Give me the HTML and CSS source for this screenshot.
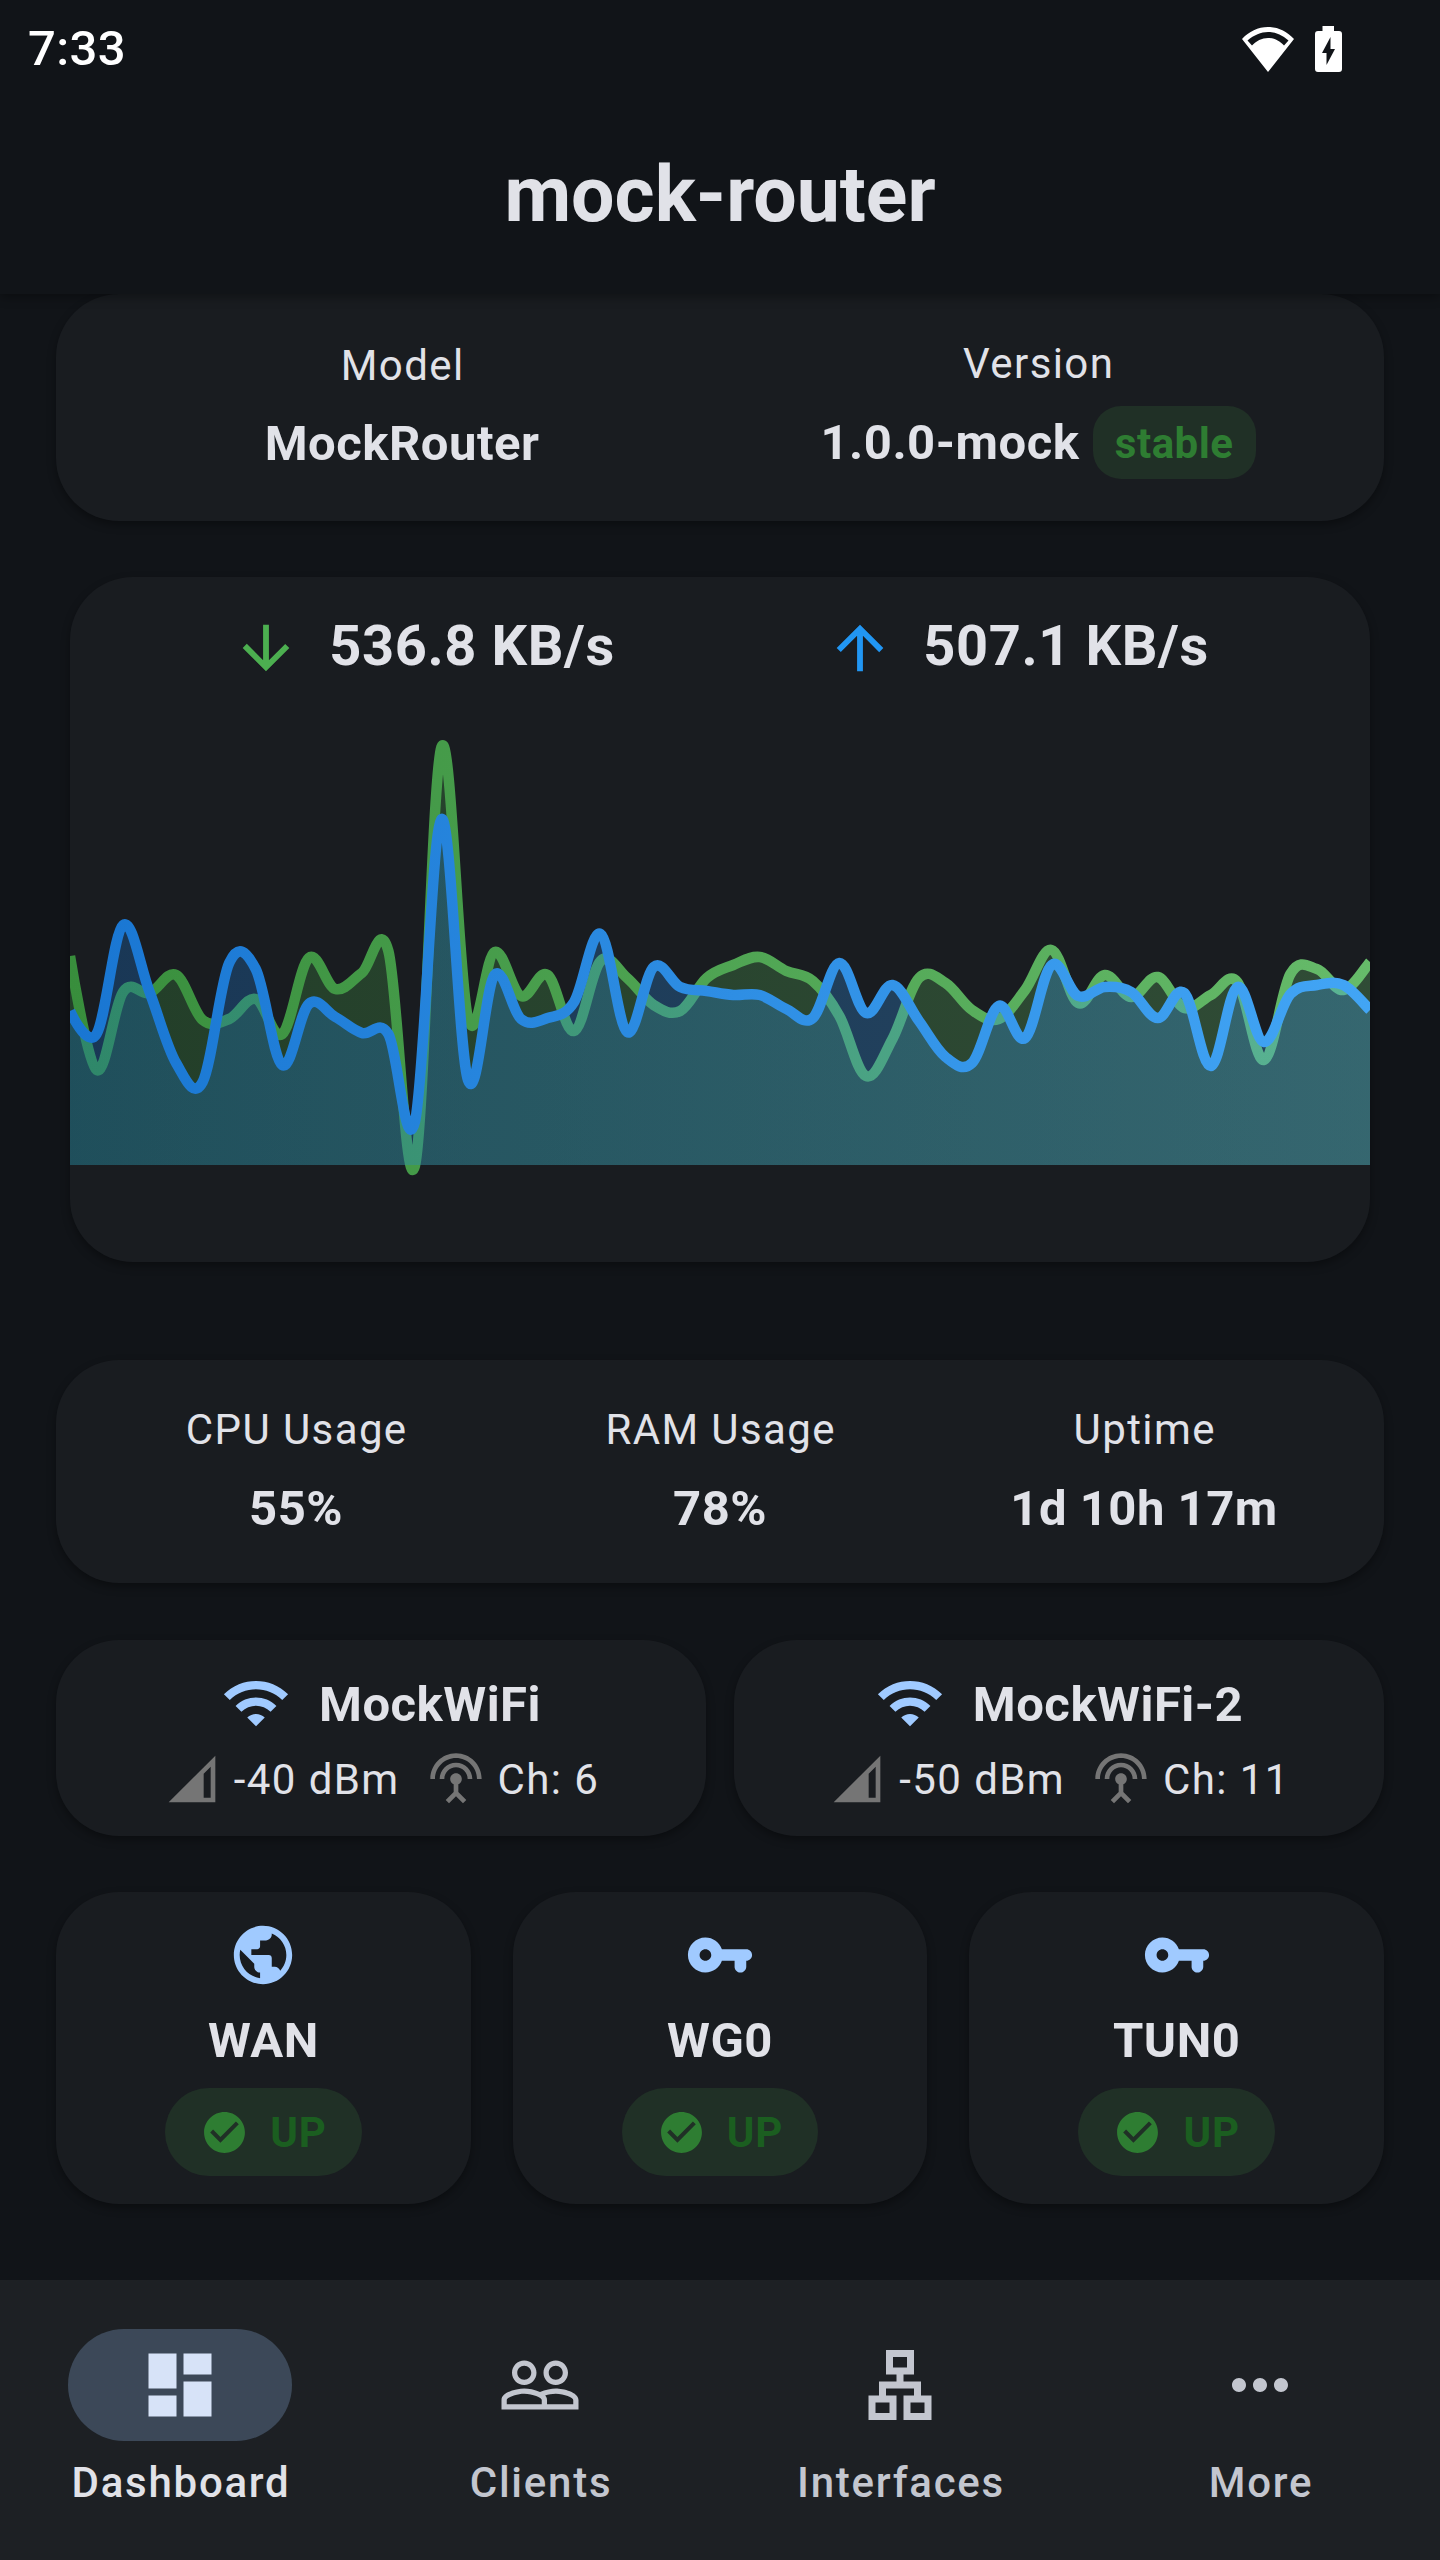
FILE: index.html
```html
<!DOCTYPE html>
<html lang="en">
<head>
<meta charset="utf-8">
<title>mock-router</title>
<link rel="stylesheet" href="styles.css">
</head>
<body>
<svg class="sprite" aria-hidden="true">
  <symbol id="wifi" viewBox="0 0 24 24"><path d="M1 9l2 2c4.97-4.97 13.03-4.97 18 0l2-2C16.93 2.93 7.08 2.93 1 9zm8 8l3 3 3-3c-1.65-1.66-4.34-1.66-6 0zm-4-4l2 2c2.76-2.76 7.24-2.76 10 0l2-2C15.14 9.14 8.87 9.14 5 13z"/></symbol>
  <symbol id="signal" viewBox="0 0 24 24"><path fill-rule="evenodd" d="M2 22h20V2zM20 20h-3V9.800l3-3z"/></symbol>
  <symbol id="antenna" viewBox="0 0 24 24"><path d="M12 5c-3.870 0-7 3.130-7 7h2c0-2.760 2.240-5 5-5s5 2.240 5 5h2c0-3.870-3.130-7-7-7zm1 9.290c.880-.390 1.500-1.260 1.500-2.290 0-1.380-1.120-2.500-2.500-2.500S9.500 10.620 9.500 12c0 1.020.620 1.900 1.500 2.290v3.300L7.590 21 9 22.410l3-3 3 3L16.410 21 13 17.590v-3.300zM12 1C5.930 1 1 5.930 1 12h2c0-4.970 4.030-9 9-9s9 4.030 9 9h2c0-6.070-4.930-11-11-11z"/></symbol>
  <symbol id="globe" viewBox="0 0 24 24"><path d="M12 2C6.480 2 2 6.480 2 12s4.480 10 10 10 10-4.480 10-10S17.520 2 12 2zm-1 17.930c-3.950-.490-7-3.850-7-7.930 0-.620.080-1.210.210-1.790L9 15v1c0 1.100.9 2 2 2v1.930zm6.900-2.540c-.260-.810-1-1.390-1.900-1.390h-1v-3c0-.550-.450-1-1-1H8v-2h2c.550 0 1-.450 1-1V7h2c1.100 0 2-.9 2-2v-.410c2.930 1.190 5 4.060 5 7.410 0 2.080-.8 3.970-2.100 5.390z"/></symbol>
  <symbol id="key" viewBox="0 0 24 24"><path d="M21 10h-8.350C11.830 7.670 9.610 6 7 6c-3.310 0-6 2.690-6 6s2.690 6 6 6c2.610 0 4.830-1.670 5.650-4H17v2c0 1.100.9 2 2 2s2-.9 2-2v-2c1.100 0 2-.9 2-2s-.9-2-2-2zM7 14c-1.100 0-2-.9-2-2s.9-2 2-2 2 .9 2 2-.9 2-2 2z"/></symbol>
  <symbol id="check" viewBox="0 0 24 24"><path d="M12 2C6.480 2 2 6.480 2 12s4.480 10 10 10 10-4.480 10-10S17.520 2 12 2zm-2 15l-5-5 1.410-1.410L10 14.170l7.590-7.590L19 8l-9 9z"/></symbol>
  <symbol id="down" viewBox="0 0 24 24"><path d="M20 12l-1.410-1.410L13 16.170V4h-2v12.170l-5.580-5.590L4 12l8 8 8-8z"/></symbol>
  <symbol id="up" viewBox="0 0 24 24"><path d="M4 12l1.410 1.410L11 7.830V20h2V7.830l5.580 5.590L20 12l-8-8-8 8z"/></symbol>
  <symbol id="dashboard" viewBox="0 0 24 24"><path d="M3 13h8V3H3v10zm0 8h8v-6H3v6zm10 0h8V11h-8v10zm0-18v6h8V3h-8z"/></symbol>
  <symbol id="people" viewBox="0 0 24 24"><path d="M16.500 13c-1.200 0-3.070.340-4.500 1-1.430-.670-3.300-1-4.500-1C5.330 13 1 14.080 1 16.250V19h22v-2.750c0-2.170-4.330-3.250-6.500-3.250zm-4 4.500h-10v-1.250c0-.540 2.560-1.750 5-1.750s5 1.210 5 1.750v1.250zm9 0H14v-1.250c0-.460-.2-.860-.520-1.220.880-.3 1.960-.530 3.020-.530 2.440 0 5 1.210 5 1.750v1.250zM7.500 12c1.930 0 3.500-1.570 3.500-3.500S9.430 5 7.500 5 4 6.570 4 8.500 5.570 12 7.500 12zm0-5.500c1.100 0 2 .9 2 2s-.9 2-2 2-2-.9-2-2 .9-2 2-2zm9 5.500c1.930 0 3.500-1.570 3.500-3.500S18.430 5 16.500 5 13 6.570 13 8.500s1.570 3.500 3.500 3.500zm0-5.500c1.100 0 2 .9 2 2s-.9 2-2 2-2-.9-2-2 .9-2 2-2z"/></symbol>
  <symbol id="lan" viewBox="0 0 24 24"><path fill-rule="evenodd" d="M13 22h8v-7h-3v-4h-5V9h3V2H8v7h3v2H6v4H3v7h8v-7H8v-2h8v2h-3zM10 7V4h4v3zM9 17v3H5v-3zM19 17v3h-4v-3z"/></symbol>
  <symbol id="more" viewBox="0 0 24 24"><path d="M6 10c-1.100 0-2 .9-2 2s.9 2 2 2 2-.9 2-2-.9-2-2-2zm12 0c-1.100 0-2 .9-2 2s.9 2 2 2 2-.9 2-2-.9-2-2-2zm-6 0c-1.100 0-2 .9-2 2s.9 2 2 2 2-.9 2-2-.9-2-2-2z"/></symbol>
</svg>

<header class="topbar">
  <div class="status">
    <span class="clock">7:33</span>
    <span class="status-icons">
      <svg class="status-wifi" viewBox="0 0 52 45"><path fill-rule="evenodd" d="M26 0C16 0 7 4.500 0 12l26 33 26-33C45 4.500 36 0 26 0zM5.500 13.500C12 8 19 5 26 5s14 3 20.500 8.500L42 18.500c-4-4.500-10-7.500-16-7.500s-12 3-16 7.500z"/></svg>
      <svg class="status-battery" viewBox="0 0 27 46"><path fill-rule="evenodd" d="M7.500 0h11.500v5h5a3 3 0 0 1 3 3v35a3 3 0 0 1-3 3H3a3 3 0 0 1-3-3V8a3 3 0 0 1 3-3h4.500zM15.500 11L7 27h4.500v12L20 23h-4.500z"/></svg>
    </span>
  </div>
  <h1 class="title">mock-router</h1>
</header>

<main class="content">
  <section class="card device">
    <div class="stat model"><span class="label">Model</span><span class="value">MockRouter</span></div>
    <div class="stat"><span class="label">Version</span><span class="value version">1.0.0-mock<span class="tag">stable</span></span></div>
  </section>

  <section class="card traffic">
    <div class="rates">
      <div class="rate"><svg class="icon-rate down"><use href="#down"/></svg><span>536.8 KB/s</span></div>
      <div class="rate"><svg class="icon-rate up"><use href="#up"/></svg><span>507.1 KB/s</span></div>
    </div>
    <svg class="chart" viewBox="0 0 1300 560">
      <defs>
        <linearGradient id="green" gradientUnits="userSpaceOnUse" x1="0" y1="0" x2="1300" y2="0"><stop offset="0" stop-color="#388e3c"/><stop offset="1" stop-color="#66bb6a"/></linearGradient>
        <linearGradient id="blue" gradientUnits="userSpaceOnUse" x1="0" y1="0" x2="1300" y2="0"><stop offset="0" stop-color="#1976d2"/><stop offset="1" stop-color="#42a5f5"/></linearGradient>
      </defs>
      <path class="area" id="rx-area" fill="url(#green)"/>
      <path class="line" id="rx-line" stroke="url(#green)"/>
      <path class="area" id="tx-area" fill="url(#blue)"/>
      <path class="line" id="tx-line" stroke="url(#blue)"/>
    </svg>
  </section>

  <section class="card system">
    <div class="stat"><span class="label">CPU Usage</span><span class="value">55%</span></div>
    <div class="stat"><span class="label">RAM Usage</span><span class="value">78%</span></div>
    <div class="stat"><span class="label">Uptime</span><span class="value">1d 10h 17m</span></div>
  </section>

  <section class="wifi-row">
    <div class="card radio">
      <div class="radio-name"><svg class="icon-wifi"><use href="#wifi"/></svg><span>MockWiFi</span></div>
      <div class="radio-info"><svg class="icon-small"><use href="#signal"/></svg><span>-40 dBm</span><svg class="icon-small second"><use href="#antenna"/></svg><span>Ch: 6</span></div>
    </div>
    <div class="card radio">
      <div class="radio-name"><svg class="icon-wifi"><use href="#wifi"/></svg><span>MockWiFi-2</span></div>
      <div class="radio-info"><svg class="icon-small"><use href="#signal"/></svg><span>-50 dBm</span><svg class="icon-small second"><use href="#antenna"/></svg><span>Ch: 11</span></div>
    </div>
  </section>

  <section class="iface-row">
    <div class="card iface"><svg class="icon-iface"><use href="#globe"/></svg><span class="iface-name">WAN</span><span class="chip"><svg class="icon-check"><use href="#check"/></svg>UP</span></div>
    <div class="card iface"><svg class="icon-iface"><use href="#key"/></svg><span class="iface-name">WG0</span><span class="chip"><svg class="icon-check"><use href="#check"/></svg>UP</span></div>
    <div class="card iface"><svg class="icon-iface"><use href="#key"/></svg><span class="iface-name">TUN0</span><span class="chip"><svg class="icon-check"><use href="#check"/></svg>UP</span></div>
  </section>
</main>

<nav class="navbar">
  <a class="tab active"><span class="pill"><svg class="icon-tab"><use href="#dashboard"/></svg></span><span class="tab-label">Dashboard</span></a>
  <a class="tab"><span class="pill"><svg class="icon-tab"><use href="#people"/></svg></span><span class="tab-label">Clients</span></a>
  <a class="tab"><span class="pill"><svg class="icon-tab"><use href="#lan"/></svg></span><span class="tab-label">Interfaces</span></a>
  <a class="tab"><span class="pill"><svg class="icon-tab"><use href="#more"/></svg></span><span class="tab-label">More</span></a>
</nav>
<script src="chart.js"></script>
</body>
</html>
```

FILE: styles.css
```css
* { box-sizing: border-box; }

body {
  margin: 0;
  width: 1440px;
  height: 2560px;
  display: flex;
  flex-direction: column;
  overflow: hidden;
  background: #111418;
  color: #e1e2e8;
  font-family: Roboto, "Liberation Sans", sans-serif;
}

svg { display: block; fill: currentColor; flex: none; }
.sprite { display: none; }

.topbar {
  position: relative;
  height: 294px;
  flex: none;
  background: #111418;
  box-shadow: 0 3px 10px rgba(0, 0, 0, .35);
}
.status {
  height: 98px;
  padding: 0 98px 0 28px;
  display: flex;
  align-items: center;
  justify-content: space-between;
  color: #fff;
}
.clock { font-size: 49px; font-weight: 500; line-height: 58px; letter-spacing: .35px; }
.status-icons { display: flex; align-items: center; gap: 21.5px; }
.status-wifi { width: 52px; height: 45px; }
.status-battery { width: 27px; height: 46px; }
.title {
  margin: 0;
  height: 196px;
  line-height: 195px;
  text-align: center;
  font-size: 77px;
  font-weight: 700;
}

.content {
  flex: 1;
  padding: 0 56px;
  display: flex;
  flex-direction: column;
}
.card {
  background: #191c20;
  border-radius: 63px;
  box-shadow: 0 4px 9px rgba(0, 0, 0, .35);
}
.stat { flex: 1; display: flex; flex-direction: column; align-items: center; }
.label { padding-left: 1.4px; font-size: 42px; letter-spacing: 1.4px; line-height: 56px; }
.value { font-size: 49px; font-weight: 700; letter-spacing: .5px; line-height: 70px; }

.device { display: flex; height: 227px; padding: 42px 28px 0; }
.device .stat { gap: 14px; }
.device .model { padding-top: 2px; gap: 15px; }
.device .version { display: flex; align-items: center; gap: 13.5px; }
.tag {
  height: 73px;
  padding: 0 22px;
  border-radius: 28px;
  background: #203026;
  color: #2e7d32;
  font-size: 42px;
  line-height: 75px;
  letter-spacing: .5px;
}

.traffic {
  margin: 56px 14px 0;
  height: 685px;
  overflow: hidden;
}
.rates { display: flex; padding: 28px 56px 0; height: 125px; }
.rate { flex: 1; display: flex; justify-content: center; gap: 28px; font-size: 56px; font-weight: 700; line-height: 82px; letter-spacing: .6px; }
.icon-rate { width: 70px; height: 70px; margin-top: 8px; }
.icon-rate.down { color: #4caf50; }
.icon-rate.up { color: #2196f3; }
.chart { width: 1300px; height: 560px; overflow: hidden; }
.area { opacity: .3; }
.line { fill: none; stroke-width: 10.5; stroke-linejoin: round; }

.system { display: flex; margin-top: 98px; height: 223px; padding: 42px 28px 0; }
.system .stat { gap: 16px; }

.wifi-row { display: grid; grid-template-columns: 1fr 1fr; gap: 28px; margin-top: 57px; }
.radio { height: 196px; padding-top: 28px; display: flex; flex-direction: column; align-items: center; }
.radio-name { display: flex; align-items: center; gap: 28px; height: 70px; font-size: 49px; font-weight: 700; letter-spacing: .5px; line-height: 70px; }
.radio-name span { padding-top: 3px; }
.icon-wifi { width: 70px; height: 70px; color: #a0caff; }
.radio-info { display: flex; align-items: center; gap: 14px; height: 56px; margin-top: 13px; padding-left: 1px; font-size: 42px; letter-spacing: 1.4px; }
.icon-small { width: 56px; height: 56px; color: #757575; }
.second { margin-left: 14px; }

.iface-row { display: grid; grid-template-columns: repeat(3, 1fr); gap: 42px; margin-top: 56px; }
.iface { height: 312px; padding-top: 28px; display: flex; flex-direction: column; align-items: center; }
.icon-iface { width: 70px; height: 70px; color: #a0caff; }
.iface-name { margin-top: 16px; height: 68px; line-height: 70px; font-size: 49px; font-weight: 700; letter-spacing: .5px; }
.chip {
  display: flex;
  align-items: center;
  gap: 21px;
  height: 88px;
  margin-top: 14px;
  padding: 0 35px;
  border-radius: 44px;
  background: #203026;
  color: #1b5e20;
  font-size: 42px;
  font-weight: 700;
  letter-spacing: .8px;
}
.icon-check { width: 49px; height: 49px; color: #2e7d32; }

.navbar { flex: none; height: 280px; display: flex; background: #1d2024; }
.tab {
  flex: 1;
  display: flex;
  flex-direction: column;
  align-items: center;
  gap: 14px;
  padding-top: 49px;
  color: #c3c6cf;
  font-size: 42px;
  font-weight: 500;
  letter-spacing: 1.75px;
  line-height: 56px;
}
.tab-label { padding-left: 2px; }
.pill { display: flex; align-items: center; justify-content: center; width: 224px; height: 112px; border-radius: 56px; }
.icon-tab { width: 84px; height: 84px; }
.active { color: #e1e2e8; }
.active .pill { background: #3c4858; color: #d7e3f8; }
```

FILE: chart.js
```js
const WIDTH = 1300;
const BASE = 463;
const SMOOTH = 0.35;

// Traffic samples as heights above the chart's baseline.
const rx = [209, 95, 173, 172, 190, 145, 146, 166, 131, 207, 176, 192, 214, -1, 418, 147, 213, 169, 190, 134, 204, 187, 160, 154, 187, 200, 208, 194, 184, 149, 89, 126, 187, 182, 155, 146, 175, 215, 162, 190, 168, 188, 157, 170, 183, 105, 191, 196, 175, 203];
const tx = [154, 131, 240, 173, 102, 83, 202, 196, 100, 161, 148, 132, 131, 43, 346, 85, 190, 146, 147, 163, 231, 133, 198, 178, 174, 170, 170, 156, 147, 202, 152, 180, 144, 108, 102, 159, 127, 200, 169, 178, 173, 147, 172, 99, 178, 123, 171, 180, 180, 155];

function curve(samples) {
  const pts = samples.map((v, i) => [i * WIDTH / (samples.length - 1), BASE - v]);
  let d = `M${pts[0]}`;
  let tail = [0, 0];
  for (let i = 1; i < pts.length; i++) {
    const prev = pts[i - 1], cur = pts[i], next = pts[Math.min(i + 1, pts.length - 1)];
    const c1 = [prev[0] + tail[0], prev[1] + tail[1]];
    tail = [(next[0] - prev[0]) / 2 * SMOOTH, (next[1] - prev[1]) / 2 * SMOOTH];
    d += `C${c1} ${cur[0] - tail[0]},${cur[1] - tail[1]} ${cur}`;
  }
  return d;
}

for (const [name, samples] of [['rx', rx], ['tx', tx]]) {
  const d = curve(samples);
  document.getElementById(`${name}-line`).setAttribute('d', d);
  document.getElementById(`${name}-area`).setAttribute('d', `${d}V${BASE}H0Z`);
}
```
